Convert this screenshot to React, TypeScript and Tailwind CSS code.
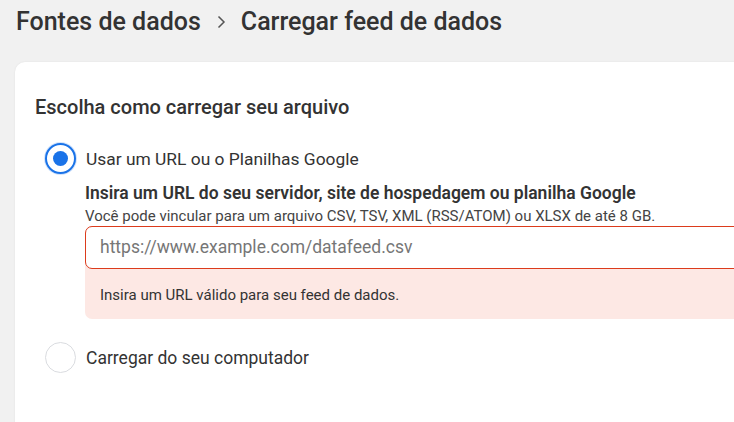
import React from "react";

function Radio(props: { checked?: boolean }) {
  if (props.checked) {
    return (
      <span className="flex h-[31px] w-[31px] shrink-0 items-center justify-center rounded-full border-2 border-[#1a73e8] bg-white shadow-[0_0_0_1px_#d2e3fc]">
        <span className="h-[15px] w-[15px] rounded-full bg-[#1a73e8]" />
      </span>
    );
  }
  return <span className="h-[31px] w-[31px] shrink-0 rounded-full border border-[#dadce0] bg-white" />;
}

export default function App() {
  return (
    <div className="h-[422px] w-[734px] overflow-hidden bg-[#f1f1f1] font-['Roboto',sans-serif] text-[#333]">
      <div className="flex items-center pl-[16px] pt-[6px] text-[25px] font-medium leading-[32px] text-[#333]">
        <span>Fontes de dados</span>
        <svg className="mx-[13px] h-[14px] w-[14px] text-[#555]" viewBox="0 0 14 14" fill="none">
          <path d="M4.5 1.5 L10 7 L4.5 12.5" stroke="currentColor" strokeWidth="1.5" />
        </svg>
        <span>Carregar feed de dados</span>
      </div>

      <div className="ml-[15px] mt-[24px] h-[400px] w-[760px] rounded-[10px] bg-white pl-[20px] pt-[33px] shadow-[0_0_2px_rgba(0,0,0,0.08)]">
        <h2 className="text-[20px] font-medium leading-[24px] text-[#333]">Escolha como carregar seu arquivo</h2>

        <div className="mt-[24px] flex items-center gap-[10px] pl-[10px]">
          <Radio checked />
          <span className="text-[17.4px] leading-[22px]">Usar um URL ou o Planilhas Google</span>
        </div>

        <div className="ml-[50px] mt-[8px]">
          <div className="text-[17.5px] font-semibold leading-[22px] text-[#333]">
            Insira um URL do seu servidor, site de hospedagem ou planilha Google
          </div>
          <div className="mt-[3px] text-[15px] leading-[18px] text-[#444]">
            Você pode vincular para um arquivo CSV, TSV, XML (RSS/ATOM) ou XLSX de até 8 GB.
          </div>
          <div className="mt-[1px] rounded-[7px] bg-[#fde8e4]">
            <div className="flex h-[43px] items-center rounded-[7px] border border-[#dc3b1c] bg-white px-[14px] text-[17.5px] text-[#767676]">
              https://www.example.com/datafeed.csv
            </div>
            <div className="px-[15px] pb-[15px] pt-[17px] text-[15px] leading-[18px] text-[#333]">
              Insira um URL válido para seu feed de dados.
            </div>
          </div>
        </div>

        <div className="mt-[23px] flex items-center gap-[10px] pl-[10px]">
          <Radio />
          <span className="text-[17.5px] leading-[22px]">Carregar do seu computador</span>
        </div>
      </div>
    </div>
  );
}
